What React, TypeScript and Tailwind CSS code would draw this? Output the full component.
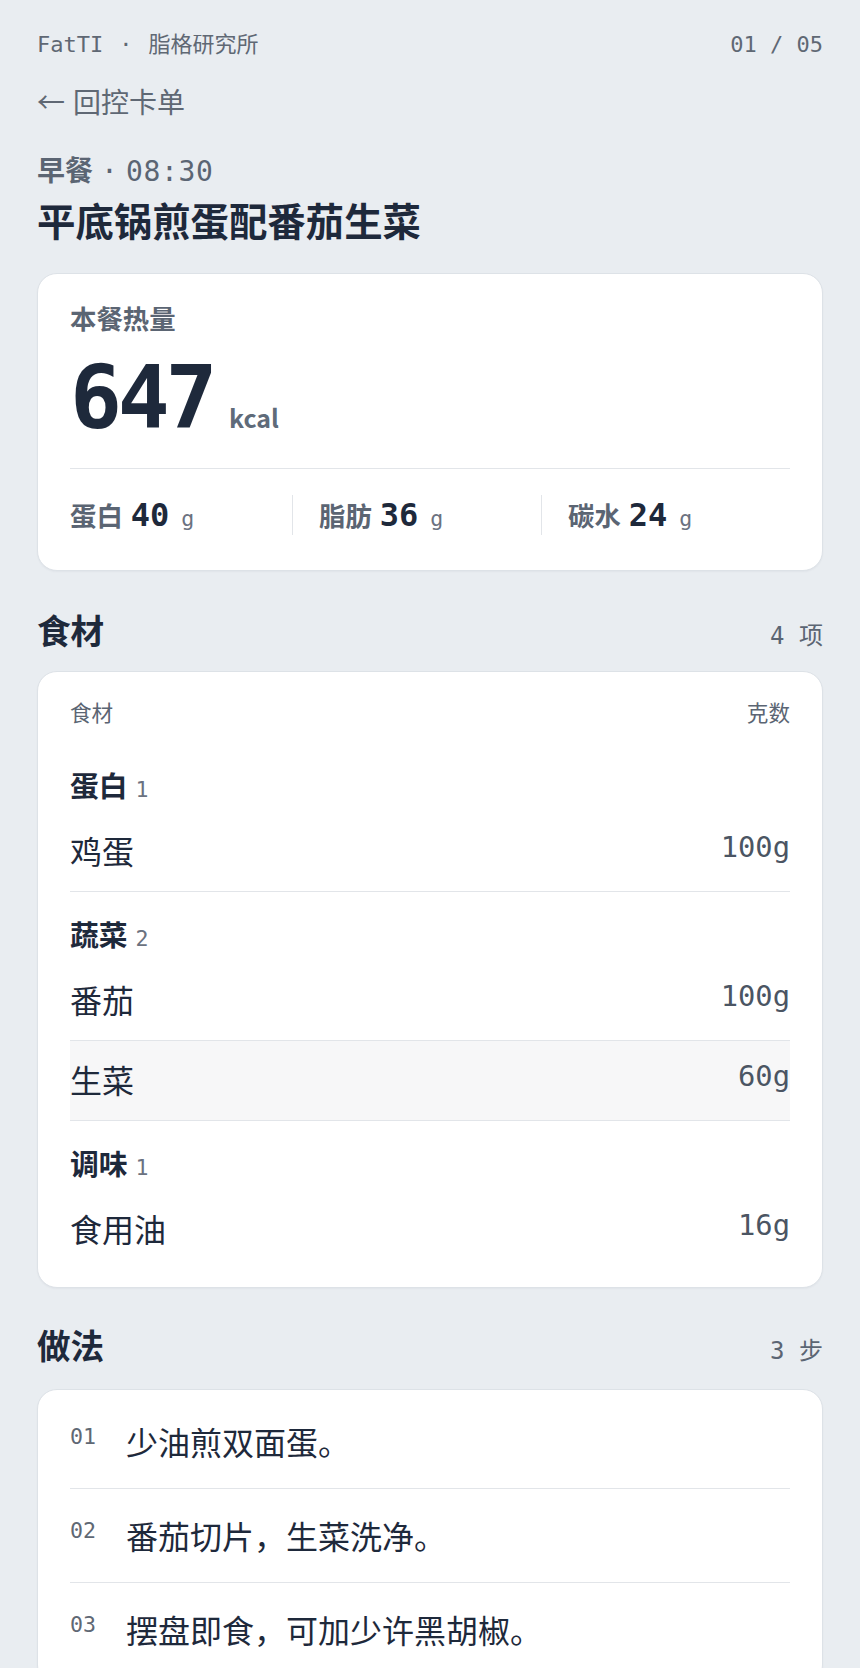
import React from "react";

const sans = "font-['Noto_Sans_CJK_SC',sans-serif]";
const mono = "font-['DejaVu_Sans_Mono','Noto_Sans_CJK_SC',monospace]";

/* ── DATA ─────────────────────────────────────────── */
const macros = [
  { label: "蛋白", value: 40 },
  { label: "脂肪", value: 36 },
  { label: "碳水", value: 24 },
];

const groups = [
  { name: "蛋白", items: [{ name: "鸡蛋", grams: "100g" }] },
  {
    name: "蔬菜",
    items: [
      { name: "番茄", grams: "100g" },
      { name: "生菜", grams: "60g", active: true },
    ],
  },
  { name: "调味", items: [{ name: "食用油", grams: "16g" }] },
];

const steps = ["少油煎双面蛋。", "番茄切片，生菜洗净。", "摆盘即食，可加少许黑胡椒。"];

const card = "rounded-[20px] border border-[#dde2e7] bg-white shadow-[0_1px_2px_rgba(15,23,42,0.04)]";

function SectionTitle({ title, count, className }: { title: string; count: string; className: string }) {
  return (
    <div className={`flex items-baseline justify-between ${className}`}>
      <h2 className="text-[33.6px] leading-[50.4px] font-bold text-[#1e293b]">{title}</h2>
      <span className={`${mono} text-[24px] leading-none text-[#5b6573]`}>{count}</span>
    </div>
  );
}

export default function App() {
  return (
    <div className={`min-h-screen bg-[#e9edf1] px-[37px] pt-7 pb-10 ${sans} text-[#1e293b]`}>
      {/* ── TOP BAR ── */}
      <div className={`${mono} flex justify-between text-[22px] leading-[33px] text-[#5f6874]`}>
        <span>
          FatTI<span className="mx-4">·</span>脂格研究所
        </span>
        <span>01 / 05</span>
      </div>

      <div className="mt-[19px] flex items-center gap-2 text-[28px] leading-[42px] text-[#5f6874]">
        <span>←</span>
        <span>回控卡单</span>
      </div>

      <div className="mt-[26px] text-[28px] leading-[42px] font-semibold text-[#5b6573]">
        早餐
        <span className={`${mono} mx-2 font-normal leading-none`}>·</span>
        <span className={`${mono} font-normal leading-none tracking-wide`}>08:30</span>
      </div>

      <h1 className="mt-[5px] text-[38.4px] leading-[48px] font-bold text-[#1e293b]">平底锅煎蛋配番茄生菜</h1>

      {/* ── CALORIES CARD ── */}
      <div className={`${card} mt-[30px] px-8 pt-6 pb-[35px]`}>
        <div className="text-[26.4px] leading-[39.6px] font-semibold text-[#5b6573]">本餐热量</div>
        <div className="mt-[17px] flex items-baseline">
          <span className={`${mono} text-[86.4px] leading-none font-bold tracking-tighter text-[#1e293b]`}>647</span>
          <span className="ml-4 text-[25px] leading-none font-bold text-[#5f6b7a]">kcal</span>
        </div>
        <div className="mt-[27px] flex border-t border-[#e2e5e9] pt-[26px]">
          {macros.map((m, i) => (
            <div
              key={m.label}
              className={`flex flex-1 items-baseline ${i > 0 ? "border-l border-[#e2e5e9] pl-[26px]" : ""}`}
            >
              <span className="text-[26.4px] leading-[40px] font-semibold text-[#5b6573]">{m.label}</span>
              <span className={`${mono} ml-2 text-[32px] leading-[40px] font-bold text-[#1e293b]`}>{m.value}</span>
              <span className={`${mono} ml-3 text-[21.6px] leading-[24px] text-[#6b7280]`}>g</span>
            </div>
          ))}
        </div>
      </div>

      {/* ── INGREDIENTS ── */}
      <SectionTitle title="食材" count="4 项" className="mt-[34px] mb-4" />
      <div className={`${card} px-8 pt-6 pb-[18px]`}>
        <div className="flex justify-between text-[21.6px] leading-[32.4px] text-[#5b6573]">
          <span>食材</span>
          <span>克数</span>
        </div>
        <div className="mt-[14px]">
          {groups.map((g, gi) => (
            <div key={g.name} className={`pt-5 ${gi > 0 ? "border-t border-[#e2e5e9]" : ""}`}>
              <div className="mb-[6px] text-[28.8px] leading-[43.2px] font-bold text-[#1e293b]">
                {g.name}
                <span className={`${mono} ml-2 text-[21.6px] leading-none font-normal text-[#6b7280]`}>
                  {g.items.length}
                </span>
              </div>
              {g.items.map((it, ii) => (
                <div
                  key={it.name}
                  className={`flex items-start justify-between pt-[14px] pb-[17px] ${
                    ii > 0 ? "border-t border-[#e2e5e9]" : ""
                  } ${it.active ? "bg-[#f7f7f8]" : ""}`}
                >
                  <span className="text-[32px] leading-[48px] text-[#1e293b]">{it.name}</span>
                  <span className={`${mono} text-[28.8px] leading-[43.2px] text-[#4b5563]`}>{it.grams}</span>
                </div>
              ))}
            </div>
          ))}
        </div>
      </div>

      {/* ── STEPS ── */}
      <SectionTitle title="做法" count="3 步" className="mt-8 mb-[18px]" />
      <div className={`${card} px-8 pt-[5px] pb-2`}>
        {steps.map((s, i) => (
          <div
            key={s}
            className={`flex items-start pt-[22px] pb-[23px] ${i > 0 ? "border-t border-[#e2e5e9]" : ""}`}
          >
            <span className={`${mono} mt-[4px] w-14 shrink-0 text-[21.6px] leading-[32.4px] text-[#5f6874]`}>
              {String(i + 1).padStart(2, "0")}
            </span>
            <span className="text-[32px] leading-[48px] text-[#1e293b]">{s}</span>
          </div>
        ))}
      </div>
    </div>
  );
}
